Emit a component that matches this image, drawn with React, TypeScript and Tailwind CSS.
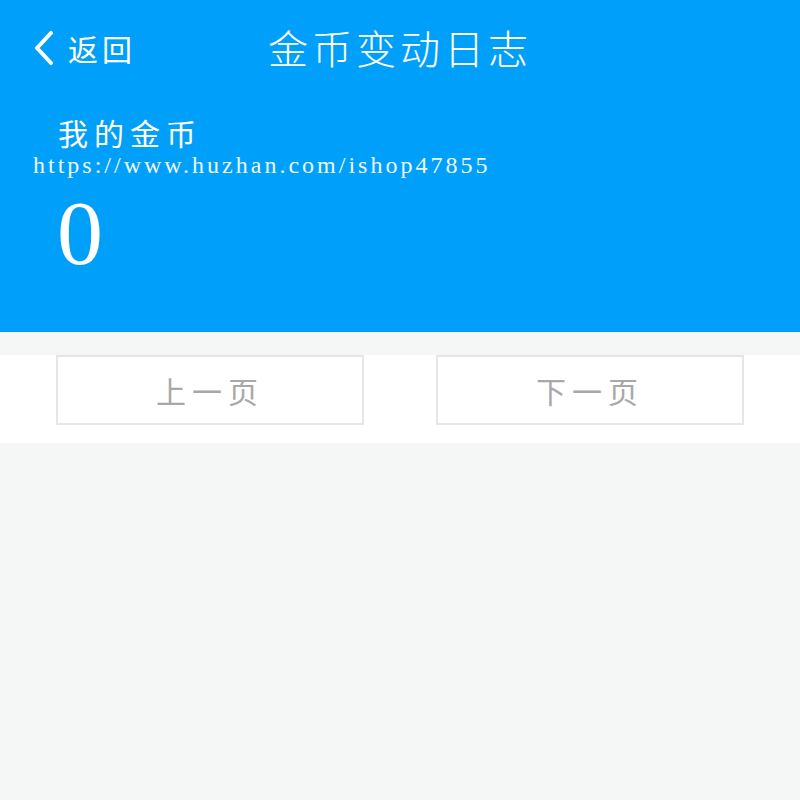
export default function App() {
  return (
    <div className="min-h-[800px] w-full bg-[#f5f6f6] flex flex-col font-['Noto_Sans_CJK_SC',sans-serif]">
      {/* Header */}
      <section className="bg-[#00a0fa] h-[332px] flex flex-col text-white">
        <div className="relative h-[100px] flex items-center">
          <div className="flex items-center pl-[34px] h-full pb-[4px]">
            <svg width="20" height="34" viewBox="0 0 20 34" className="mr-[14px]">
              <path d="M17 2 L3 17 L17 32" fill="none" stroke="white" strokeWidth="4" strokeLinecap="round" strokeLinejoin="round" />
            </svg>
            <span className="text-[30px] leading-none tracking-[4px]">返回</span>
          </div>
          <h1 className="absolute left-0 right-0 top-[27px] text-center text-[40px] leading-none tracking-[4px] font-light">
            金币变动日志
          </h1>
        </div>
        <div className="pl-[58px] mt-[17px] text-[30px] leading-none tracking-[6px]">我的金币</div>
        <div className="pl-[33px] mt-[6px] text-[24px] leading-none tracking-[3px] text-[#eef6ff] font-['Liberation_Serif',serif]">
          https://www.huzhan.com/ishop47855
        </div>
        <div className="pl-[57px] mt-[10px] text-[92px] leading-none font-['Liberation_Serif',serif]">0</div>
      </section>

      {/* Pager */}
      <div className="mt-[23px] bg-white h-[88px] flex items-start justify-between px-[56px]">
        <button className="w-[308px] h-[70px] border-2 border-[#e6e6e6] bg-white text-[#a8a8a8] text-[30px] tracking-[6px]">
          上一页
        </button>
        <button className="w-[308px] h-[70px] border-2 border-[#e6e6e6] bg-white text-[#a8a8a8] text-[30px] tracking-[6px]">
          下一页
        </button>
      </div>
    </div>
  );
}
